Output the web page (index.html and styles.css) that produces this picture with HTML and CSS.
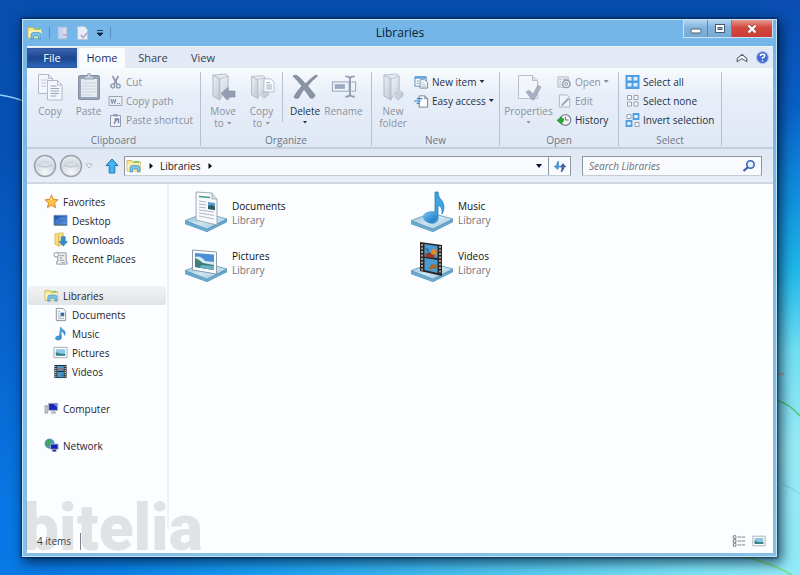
FILE: index.html
```html
<!DOCTYPE html>
<html lang="en">
<head>
<meta charset="utf-8">
<title>Libraries</title>
<link rel="stylesheet" href="styles.css">
</head>
<body>
<svg class="defs" aria-hidden="true">
  <defs>
    <linearGradient id="gFolder" x1="0" y1="0" x2="1" y2="1"><stop offset="0" stop-color="#f0f3f8"/><stop offset="1" stop-color="#bcc4d0"/></linearGradient>
    <linearGradient id="gBase" x1="0" y1="0" x2="1" y2="1"><stop offset="0" stop-color="#7fb4d4"/><stop offset=".5" stop-color="#cfe6f1"/><stop offset="1" stop-color="#8fbfdc"/></linearGradient>
    <linearGradient id="gBlue" x1="0" y1="0" x2="1" y2="1"><stop offset="0" stop-color="#7cc6f4"/><stop offset="1" stop-color="#1172c0"/></linearGradient>
    <linearGradient id="gSky" x1="0" y1="0" x2="0" y2="1"><stop offset="0" stop-color="#3f86d0"/><stop offset=".55" stop-color="#c6e6f2"/><stop offset=".6" stop-color="#3d7a7c"/><stop offset="1" stop-color="#5fb0c8"/></linearGradient>
    <linearGradient id="gDesk" x1="0" y1="0" x2="1" y2="1"><stop offset="0" stop-color="#1c4a9c"/><stop offset="1" stop-color="#5b9be6"/></linearGradient>
    <radialGradient id="gOrb" cx=".5" cy=".8" r=".8"><stop offset="0" stop-color="#f6f8fa"/><stop offset=".6" stop-color="#d3d9e0"/><stop offset="1" stop-color="#eef1f5"/></radialGradient>
  </defs>
  <symbol id="lib" viewBox="0 0 16 14">
    <path d="M1 1.500h5l1 1.500h7.500v9H1z" fill="#f5e58c" stroke="#c8b252" stroke-width=".8"/>
    <path d="M1.500 4.500h13v7h-13z" fill="#fbf2b4"/>
    <path d="M8 2h5v2H8z" fill="#8fc66a"/>
    <path d="M4 13V9q0-2.500 2.500-2.500h5Q14 6.500 14 9v4h-2.500v-3h-5v3z" fill="#7cc3e8" stroke="#3f8fc0" stroke-width=".7"/>
  </symbol>
  <symbol id="copy" viewBox="0 0 26 28">
    <g fill="#f4f6fb" stroke="#b0bacb"><path d="M1.500 1.500h10l4 4v15h-14z"/><path d="M11.500 1.500v4h4" fill="none"/><path d="M4 7h7M4 10h5M4 13h5" stroke-width=".8"/>
    <path d="M10.500 7.500h10l4.500 4.500v15H10.500z"/><path d="M20.500 7.500V12H25" fill="none"/></g>
    <path d="M13.500 13h6M13.500 15.500h8.500M13.500 18h8.500M13.500 20.500h8.500M13.500 23h6" stroke="#98a3b6"/>
  </symbol>
  <symbol id="paste" viewBox="0 0 24 28">
    <rect x="1.500" y="2.500" width="21" height="24" rx="1.500" fill="#98a4b8" stroke="#8390a6"/>
    <rect x="4" y="6" width="16" height="18" fill="#e6ebf4"/>
    <path d="M5 10h14M5 13h14M5 16h14M5 19h14M5 22h10" stroke="#c6cddb" stroke-width=".8"/>
    <path d="M7 6V3h3q0-2.500 2-2.500T14 3h3v3z" fill="#c6cedb" stroke="#8390a6" stroke-width=".8"/>
  </symbol>
  <symbol id="folder" viewBox="0 0 24 28">
    <path d="M3 2l13-1 2 2v16l-9 6z" fill="#e4e8ef" stroke="#b4bcca" stroke-width=".9"/>
    <path d="M3 2l7 4v21l-7-4z" fill="url(#gFolder)" stroke="#a6b0c0" stroke-width=".9"/>
    <path d="M10 6l8-3v14l4 3v3l-5 4-3-3 3-3-1-2-6 7z" fill="url(#gFolder)" stroke="#b4bcca" stroke-width=".8"/>
  </symbol>
  <symbol id="moveto" viewBox="0 0 26 28"><use href="#folder" width="24" height="28"/><path d="M11 20.500l7-6v3.500h7v6h-7v3z" fill="#939eb1" stroke="#8490a4" stroke-width=".7"/></symbol>
  <symbol id="copyto" viewBox="0 0 27 28"><use href="#folder" width="22" height="28"/><path d="M15.500 5.500h7l3.500 3.500v10h-10.500z" fill="#fbfcfe" stroke="#a3afc3" stroke-width=".8"/><path d="M18 9.500h4M18 12h6M18 14h6M18 16h6" stroke="#8a96aa" stroke-width=".8"/></symbol>
  <symbol id="delete" viewBox="0 0 26 26"><path d="M1 2q3-2 6 1 4 4 6.500 7Q19 4 24 1l1.500 1Q20 6 15.500 12q5 6 7.500 9-1 4-4.500 3Q15 19 12 15q-3 4-5.500 9-4 1-4.500-1 3-6 8-11Q5 6 1 2z" fill="#8a94a5" stroke="#747f92" stroke-width=".8"/></symbol>
  <symbol id="rename" viewBox="0 0 28 26">
    <rect x="1.500" y="7.500" width="18" height="10" fill="#edf1f8" stroke="#94a1b6"/><rect x="4" y="10" width="11" height="5" fill="#9ca8bc"/><path d="M22 7.500h4.500v10H22" fill="none" stroke="#94a1b6"/>
    <path d="M15.500 1.500q4 0 5 2 1-2 5-2M15.500 23.500q4 0 5-2 1 2 5 2M20.500 3v19" fill="none" stroke="#8f9bb0" stroke-width="2"/>
  </symbol>
  <symbol id="props" viewBox="0 0 26 28"><path d="M2.500 2.500h14l5 5v18h-19z" fill="#f2f5fa" stroke="#b8c0cf"/><path d="M16.500 2.500v5h5" fill="#dbe1eb" stroke="#b8c0cf"/><path d="M10 19l3-2 4 4 5-9 3 2-7 13h-2z" fill="#a6b0c1" stroke="#97a2b4" stroke-width=".6"/></symbol>
  <symbol id="cut" viewBox="0 0 14 14"><path d="M4 1l4.500 8M10 1L5.500 9" stroke="#8a95a8" stroke-width="1.600"/><circle cx="4.200" cy="11" r="1.900" fill="none" stroke="#8a95a8" stroke-width="1.300"/><circle cx="9.800" cy="11" r="1.900" fill="none" stroke="#8a95a8" stroke-width="1.300"/></symbol>
  <symbol id="path" viewBox="0 0 14 14"><path d="M.5 2.500h13v9H.5z" fill="#e9edf4" stroke="#9ba6b9"/><path d="M2.500 5l1.200 4.500L5 5l1.200 4.500L7.500 5M8.500 9.500h1M10.500 9.500h1" fill="none" stroke="#7f8a9e"/></symbol>
  <symbol id="shortcut" viewBox="0 0 14 14"><path d="M2 2.500h10v11H2z" fill="#eef1f7" stroke="#8f9bb0"/><path d="M5 1h4v2.500H5z" fill="#8f9bb0"/><path d="M6 6h4v4M10 6q-4 1-4 5" fill="none" stroke="#7b88a0" stroke-width="1.400"/></symbol>
  <symbol id="newitem" viewBox="0 0 16 14"><path d="M1 1.500h12v10H1z" fill="#fff" stroke="#4c8cc8"/><path d="M1 1h12v2.500H1z" fill="#5ea0da"/><path d="M3 6h2M3 8.500h2" stroke="#4c8cc8"/><path d="M6.500 4.500h5l3 3v6h-8z" fill="#f7f9fc" stroke="#7b8796"/><path d="M8 8h3M8 10h5M8 12h5" stroke="#9ba5b2" stroke-width=".7"/></symbol>
  <symbol id="easy" viewBox="0 0 16 14"><path d="M5.500 1.500h6l3 3v9h-9z" fill="#fff" stroke="#6d8096"/><path d="M11.500 1.500v3h3" fill="none" stroke="#6d8096"/><path d="M3 4.500h6M0 7h7M3 9.500h3" stroke="#2f83d0" stroke-width="1.300"/></symbol>
  <symbol id="open" viewBox="0 0 16 14"><path d="M1 1.500h11v11H1z" fill="#eceff5" stroke="#adb6c5"/><path d="M2.500 4h2M2.500 7h2M2.500 10h2M6 4h5" stroke="#9ca7b8"/><circle cx="10" cy="9" r="4" fill="#e6eaf1" stroke="#8a95a7" stroke-width="1.400"/><circle cx="10" cy="9" r="1.500" fill="none" stroke="#8a95a7"/></symbol>
  <symbol id="edit" viewBox="0 0 16 14"><path d="M2.500 .5h8l3 3v10h-11z" fill="#f1f4f9" stroke="#a9b3c4"/><path d="M13 5L7 11l-2 1 .5-2 6-6z" fill="#a9b4c6" stroke="#8b98ae" stroke-width=".7"/></symbol>
  <symbol id="history" viewBox="0 0 16 14"><circle cx="9" cy="7" r="5.700" fill="#f2f4f5" stroke="#7f8890" stroke-width="1.300"/><path d="M9 3.500V7h3" fill="none" stroke="#606a74"/><path d="M0 7.500L4.500 3.500v2h2.500l-.5 3.500H5v2.500z" fill="#27a82e" stroke="#14801d" stroke-width=".6"/></symbol>
  <symbol id="selall" viewBox="0 0 14 14"><path d="M0 0h14v14H0z" fill="#4d9fe4"/><path d="M2 2h4v3.500H2zM8 2h4v3.500H8zM2 8h4v3.500H2zM8 8h4v3.500H8z" fill="#e2effc"/></symbol>
  <symbol id="selnone" viewBox="0 0 14 14"><path d="M2 1.500h4v4H2zM8.500 1.500h4v4h-4zM2 8h4v4H2zM8.500 8h4v4h-4z" fill="#f7f8fa" stroke="#99a1ae"/></symbol>
  <symbol id="selinv" viewBox="0 0 14 14"><path d="M1.500 1.500h4v4h-4zM9.500 9.500h4v4h-4z" fill="#f7f8fa" stroke="#99a1ae"/><path d="M8 1h5v5H8zM1 8h5v5H1z" fill="#f2f8ff" stroke="#4d9fe4" stroke-width="1.800"/></symbol>
  <symbol id="tick" viewBox="0 0 14 14"><path d="M1.500 .5h7l3 3v10h-10z" fill="#e9edf8" stroke="#b4c2e2"/><path d="M5 9l2 2.500L12 6" fill="none" stroke="#b5abd0" stroke-width="1.800"/></symbol>
  <symbol id="delpage" viewBox="0 0 14 14"><path d="M2 1h9v12H2z" fill="#c4d6ee" stroke="#a3bbe0"/><path d="M7 2h3v9H7z" fill="#e2d9ea"/><path d="M7 9h4" stroke="#b5a0c6" stroke-width="1.500"/></symbol>
  <symbol id="up" viewBox="0 0 14 16"><path d="M7 1l6 6.500H9.800V15H4.200V7.500H1z" fill="#43b4f2" stroke="#2174ae"/></symbol>
  <symbol id="refresh" viewBox="0 0 14 14"><path d="M5.500 2Q3.500 3 3.500 7H1l3.500 3.500L7 7H5.500z" fill="#4a9cd4" stroke="#2f78b6" stroke-width=".5"/><path d="M8 13q3-1.500 3-5h2L10 4.500 7 8h1.800Q9 11 8 13z" fill="#3f66b0" stroke="#2a4d94" stroke-width=".5"/></symbol>
  <symbol id="search" viewBox="0 0 14 14"><circle cx="8.500" cy="5.500" r="3.700" fill="#e4effa" stroke="#3b66b0" stroke-width="1.600"/><path d="M5.700 8.300L1.500 12" stroke="#3b66b0" stroke-width="2.200"/></symbol>
  <symbol id="star" viewBox="0 0 16 16"><path d="M8 1l2 4.700 5 .5-3.800 3.400 1.200 5L8 12l-4.400 2.600 1.200-5L1 6.200l5-.5z" fill="#fcc445" stroke="#d48728"/><path d="M8 3l1 3.500H6.500z" fill="#ffe9a0"/></symbol>
  <symbol id="desktop" viewBox="0 0 16 14"><path d="M1 1.500h14v10H1z" fill="url(#gDesk)" stroke="#6287b8" stroke-width=".7"/><path d="M1 11h14v1.500H1z" fill="#4a6690"/><path d="M3 9Q7 3 13 5" stroke="#6aa5ee" fill="none" stroke-width=".7"/></symbol>
  <symbol id="down" viewBox="0 0 16 16"><path d="M2 2l4-1h5v12l-5 2-4-2z" fill="#f5dc86" stroke="#d8b653" stroke-width=".8"/><path d="M6 3v12" stroke="#d8b653"/><path d="M9 5h4v5h2.500L11 15l-4.500-5H9z" fill="#2f8fd4" stroke="#1b6aa8" stroke-width=".6"/></symbol>
  <symbol id="recent" viewBox="0 0 16 16"><path d="M3 2h11v9h1v3H4v-3h1V6H3z" fill="#eef1f3" stroke="#8e979f"/><path d="M7 5h5M7 7.500h3M7 10h5M9 12.500h4" stroke="#89949e"/><circle cx="3.500" cy="4" r="2.500" fill="#f7f8f8" stroke="#8e979f"/></symbol>
  <symbol id="doc" viewBox="0 0 16 16"><path d="M3.500 1.500h7l3 3v10h-10z" fill="#fff" stroke="#868d95"/><path d="M5 4.500h3M5 6.500h2M5 8.500h2M5 10.500h7M5 12.500h7" stroke="#8aa0b8" stroke-width=".8"/><path d="M8 6h4v3.500H8z" fill="#39659c"/></symbol>
  <symbol id="note" viewBox="0 0 16 16"><path d="M8 1q1 2 3.500 3.500Q14 6.500 12.500 10q0-3-4-4.500l.5 7q0 2-3 2.500-3.500 0-3.500-2Q3 10.500 7 10.500z" fill="url(#gBlue)" stroke="#2683bd" stroke-width=".6"/></symbol>
  <symbol id="pic" viewBox="0 0 16 14"><path d="M1 1.500h14v11H1z" fill="#fff" stroke="#a0aab2"/><path d="M3 3.500h10v7H3z" fill="#8cc8e4"/><path d="M3 6.500l4 1.500 6 .5v2H3z" fill="#3a8288"/></symbol>
  <symbol id="film" viewBox="0 0 16 16"><path d="M1.500 1h13v14h-13z" fill="#25313a"/><path d="M4.500 2h7v5.500h-7zM4.500 8.500h7V14h-7z" fill="#4796cb"/><path d="M3 2v12M13 2v12" stroke="#e1e6e8" stroke-width="1.200" stroke-dasharray="1.200 1"/><path d="M5 5l3-1 3 2-2 1z" fill="#a96b5a"/><path d="M6 11l3 1 2-1v2z" fill="#335d74"/></symbol>
  <symbol id="pc" viewBox="0 0 16 16"><path d="M1 5h3v8H1z" fill="#c1c7cc" stroke="#8d969c" stroke-width=".7"/><path d="M5 2.500h9.500v7.500H5z" fill="#1a26b4" stroke="#a9b0bc"/><path d="M10 3l4 0v4z" fill="#6b82e4"/><path d="M8 10.500h4l1 3H7z" fill="#b9bec7"/></symbol>
  <symbol id="net" viewBox="0 0 16 16"><circle cx="6" cy="6" r="5" fill="#3f9fc6" stroke="#48808c" stroke-width=".6"/><path d="M2 4q3-3 6-2Q5 5 6 8l-3 1z" fill="#45a44e"/><path d="M7 6.500h8V12H7z" fill="#1420c0" stroke="#9ea9ba"/><path d="M9.500 12.500h3l1 2h-5z" fill="#1d2a78"/></symbol>
  <symbol id="base" viewBox="0 0 44 42">
    <path d="M1 30l20-8 22 6v3L23 41 1 33z" fill="#4c8cb5"/><path d="M1 33l22 8 20-10v-2L23 38 1 30z" fill="#67a9cf"/>
    <path d="M1 29.500L21 22l22 6-20 10z" fill="url(#gBase)" stroke="#6497b6" stroke-width=".7"/>
  </symbol>
  <symbol id="L-doc" viewBox="0 0 44 42"><use href="#base" width="44" height="42"/><path d="M12 1l16 1 5 6v26l-21-5z" fill="#f7f9fc" stroke="#8e98a6" stroke-width=".8"/><path d="M28 2v6h5" fill="#d8dfe8" stroke="#8e98a6" stroke-width=".7"/><path d="M15 5.500l11 1" stroke="#3e9d86" stroke-width="1.500"/><path d="M15 10l7 1M15 13l7 1M15 16l7 1M15 19l15 2M15 22l15 2.500M15 25l15 3" stroke="#b4b6c6"/><path d="M24 11l7 1v7l-7-1z" fill="#5c9cc4"/><path d="M24 15l4-1 3 2v3l-7-1z" fill="#2c5962"/></symbol>
  <symbol id="L-pic" viewBox="0 0 44 42"><use href="#base" width="44" height="42"/><path d="M8.500 9l24 2v22l-24-4z" fill="#fafcfd" stroke="#8f9ba5"/><path d="M11 12l19 1.500V29L11 26z" fill="#4a8ed4"/><path d="M11 16q6-2 10 4l9 1v4L11 23z" fill="#d4ebf2"/><path d="M11 17q5 2 8 5l11 2v5L11 26z" fill="#3f7c7c"/><path d="M17 24l13 1v4l-14-2z" fill="#6cb0c4"/></symbol>
  <symbol id="L-mus" viewBox="0 0 44 42"><use href="#base" width="44" height="42"/><path d="M25 1h3q0 5 4 9 4 6 0 13 1-7-4-9v14q-1 5-8 4-6-2-6-7 2-5 11-4z" fill="#3ba3e6" stroke="#1b70ab" stroke-width=".7"/><ellipse cx="20" cy="26" rx="7" ry="5.500" fill="url(#gBlue)"/></symbol>
  <symbol id="L-vid" viewBox="0 0 44 42"><use href="#base" width="44" height="42"/><path d="M10 1l22 3v31l-22-5z" fill="#2a2522"/><path d="M14.500 3l13 2v12l-13-1.500zM14.500 17l13 2v13l-13-3z" fill="#4a9bd4"/><path d="M12 3v27M30 5v28" stroke="#c4c4c0" stroke-width="1.500" stroke-dasharray="2 1.500"/><path d="M15 13l4-2 3 2 4-3-2 7-8-1z" fill="#9a3b28"/><circle cx="24" cy="11" r="3" fill="#d98a32"/><path d="M18 28l4-5 5 1-1 4z" fill="#a26b32"/><path d="M15 7l4 1-1 3z" fill="#28669e"/></symbol>
  <symbol id="v-list" viewBox="0 0 16 14"><path d="M1.500 1h3v3h-3zM1.500 5.500h3v3h-3zM1.500 10h3v3h-3z" fill="#fff" stroke="#6c7277"/><path d="M6.500 2.500H15M6.500 7H15M6.500 11.500H15" stroke="#6c7277" stroke-dasharray="4 .8"/></symbol>
</svg>

<svg class="wallpaper" viewBox="0 0 800 575" preserveAspectRatio="none" aria-hidden="true">
  <path d="M0 95q14 2 26 7" fill="none" stroke="#8fd0ff" stroke-width="1.500"/>
  <path d="M776 400q14 4 24 16" fill="none" stroke="#55c878" stroke-width="1.500"/>
  <path d="M740 556q30 6 52 19" fill="none" stroke="#7fe08c" stroke-width="2"/>
  <path d="M778 374h6" stroke="#a6b6ae" stroke-width="3"/>
  <path d="M782 484q10 4 18 10" fill="none" stroke="#6fd8d8"/>
</svg>

<main class="window">
  <header class="titlebar">
    <div class="quick">
      <svg class="i-lib"><use href="#lib"/></svg>
      <i class="tick"></i>
      <button class="bare" disabled aria-label="Delete"><svg class="i14"><use href="#delpage"/></svg></button>
      <button class="bare" disabled aria-label="Properties"><svg class="i14"><use href="#tick"/></svg></button>
      <button class="bare" aria-label="Customize toolbar"><svg class="i8" viewBox="0 0 8 8"><path d="M1 1.500h6M1 4h6L4 7z" stroke="#10243c" fill="#10243c" stroke-width=".8"/></svg></button>
      <i class="tick"></i>
    </div>
    <h1>Libraries</h1>
    <div class="caption">
      <button aria-label="Minimize"><svg viewBox="0 0 14 10"><rect x="2" y="5" width="10" height="4" rx="1" fill="#fff" stroke="#4a5b70"/></svg></button>
      <button aria-label="Maximize"><svg viewBox="0 0 14 10"><rect x="2.500" y=".5" width="9" height="8" fill="#fff" stroke="#4a5b70"/><rect x="5" y="3.500" width="4" height="2" fill="#7fb0da" stroke="#4a5b70"/></svg></button>
      <button class="close" aria-label="Close"><svg viewBox="0 0 14 10"><path d="M3.500 1.500l7 7M10.500 1.500l-7 7" stroke="#8a4444" stroke-width="3.600"/><path d="M3.500 1.500l7 7M10.500 1.500l-7 7" stroke="#fff" stroke-width="2.400"/></svg></button>
    </div>
  </header>

  <div class="client">
    <nav class="tabs">
      <button class="file">File</button>
      <button class="home">Home</button>
      <button>Share</button>
      <button>View</button>
      <span class="tools">
        <button class="bare" aria-label="Minimize the ribbon"><svg class="i10" viewBox="0 0 10 10"><path d="M1 5.500L5 2l4 3.500V8L5 5.500 1 8z" fill="#fff" stroke="#59616c" stroke-width=".9"/></svg></button>
        <button class="bare" aria-label="Help"><svg class="i12" viewBox="0 0 12 12"><circle cx="6" cy="6" r="5.500" fill="#3f6ad0" stroke="#a9bfea"/><path d="M4 4.500Q4 3 6 3t2 1.500Q8 5.700 6 6.200v1M6 8.200v1.300" fill="none" stroke="#fff" stroke-width="1.400"/></svg></button>
      </span>
    </nav>

    <section class="ribbon">
      <div class="group">
        <div class="tools-row g-clip">
          <button class="big" disabled><svg><use href="#copy"/></svg>Copy</button>
          <button class="big narrow" disabled><svg><use href="#paste"/></svg>Paste</button>
          <div class="stack">
            <button disabled><svg><use href="#cut"/></svg>Cut</button>
            <button disabled><svg><use href="#path"/></svg>Copy path</button>
            <button disabled><svg><use href="#shortcut"/></svg>Paste shortcut</button>
          </div>
        </div>
        <h2>Clipboard</h2>
      </div>
      <div class="group">
        <div class="tools-row g-org">
          <button class="big" disabled><svg><use href="#moveto"/></svg>Move<span>to <i class="arrow"></i></span></button>
          <button class="big narrow" disabled><svg><use href="#copyto"/></svg>Copy<span>to <i class="arrow"></i></span></button>
          <i class="rule"></i>
          <button class="big"><svg><use href="#delete"/></svg>Delete<span><i class="arrow"></i></span></button>
          <button class="big narrow" disabled><svg><use href="#rename"/></svg>Rename</button>
        </div>
        <h2>Organize</h2>
      </div>
      <div class="group">
        <div class="tools-row g-new">
          <button class="big" disabled><svg><use href="#folder"/></svg>New<span>folder</span></button>
          <div class="stack">
            <button><svg><use href="#newitem"/></svg>New item<i class="arrow"></i></button>
            <button><svg><use href="#easy"/></svg>Easy access<i class="arrow"></i></button>
          </div>
        </div>
        <h2>New</h2>
      </div>
      <div class="group">
        <div class="tools-row g-open">
          <button class="big" disabled><svg><use href="#props"/></svg>Properties<span><i class="arrow"></i></span></button>
          <div class="stack">
            <button disabled><svg><use href="#open"/></svg>Open<i class="arrow"></i></button>
            <button disabled><svg><use href="#edit"/></svg>Edit</button>
            <button><svg><use href="#history"/></svg>History</button>
          </div>
        </div>
        <h2>Open</h2>
      </div>
      <div class="group">
        <div class="tools-row g-sel">
          <div class="stack">
            <button><svg><use href="#selall"/></svg>Select all</button>
            <button><svg><use href="#selnone"/></svg>Select none</button>
            <button><svg><use href="#selinv"/></svg>Invert selection</button>
          </div>
        </div>
        <h2>Select</h2>
      </div>
    </section>

    <div class="navbar">
      <div class="travel">
        <button class="bare" disabled aria-label="Back"><svg class="orb" viewBox="0 0 24 24"><circle cx="12" cy="12" r="10.500" fill="url(#gOrb)" stroke="#9aa2ac" stroke-width="1.500"/><path d="M5 11q7 4 14 0" stroke="#b5bdc7" fill="none"/></svg></button>
        <button class="bare" disabled aria-label="Forward"><svg class="orb" viewBox="0 0 24 24"><circle cx="12" cy="12" r="10.500" fill="url(#gOrb)" stroke="#9aa2ac" stroke-width="1.500"/><path d="M5 11q7 4 14 0" stroke="#b5bdc7" fill="none"/></svg></button>
        <button class="bare" disabled aria-label="Recent pages"><svg class="i8" viewBox="0 0 8 8"><path d="M1 2h6L4 6z" fill="#fff" stroke="#b0b8c2"/></svg></button>
      </div>
      <button class="bare up" aria-label="Up"><svg><use href="#up"/></svg></button>
      <div class="address">
        <svg class="i-lib"><use href="#lib"/></svg>
        <svg class="i8" viewBox="0 0 8 8"><path d="M2.500 1v6L6 4z"/></svg>
        <a href="#">Libraries</a>
        <svg class="i8" viewBox="0 0 8 8"><path d="M2.500 1v6L6 4z"/></svg>
        <button class="bare drop" aria-label="Previous locations"><svg class="i8" viewBox="0 0 8 8"><path d="M1 2h6L4 6z" fill="#06103c"/></svg></button>
        <button class="bare refresh" aria-label="Refresh"><svg class="i14"><use href="#refresh"/></svg></button>
      </div>
      <label class="search"><input type="text" placeholder="Search Libraries" aria-label="Search Libraries"><svg class="i14"><use href="#search"/></svg></label>
    </div>

    <div class="body">
      <aside class="tree">
        <ul>
          <li><a href="#"><svg><use href="#star"/></svg>Favorites</a></li>
          <li class="sub"><a href="#"><svg><use href="#desktop"/></svg>Desktop</a></li>
          <li class="sub"><a href="#"><svg><use href="#down"/></svg>Downloads</a></li>
          <li class="sub"><a href="#"><svg><use href="#recent"/></svg>Recent Places</a></li>
        </ul>
        <ul>
          <li class="selected"><a href="#"><svg><use href="#lib"/></svg>Libraries</a></li>
          <li class="sub"><a href="#"><svg><use href="#doc"/></svg>Documents</a></li>
          <li class="sub"><a href="#"><svg><use href="#note"/></svg>Music</a></li>
          <li class="sub"><a href="#"><svg><use href="#pic"/></svg>Pictures</a></li>
          <li class="sub"><a href="#"><svg><use href="#film"/></svg>Videos</a></li>
        </ul>
        <ul><li><a href="#"><svg><use href="#pc"/></svg>Computer</a></li></ul>
        <ul><li><a href="#"><svg><use href="#net"/></svg>Network</a></li></ul>
      </aside>
      <section class="files">
        <a class="item" href="#"><svg><use href="#L-doc"/></svg><span>Documents<small>Library</small></span></a>
        <a class="item" href="#"><svg><use href="#L-mus"/></svg><span>Music<small>Library</small></span></a>
        <a class="item" href="#"><svg><use href="#L-pic"/></svg><span>Pictures<small>Library</small></span></a>
        <a class="item" href="#"><svg><use href="#L-vid"/></svg><span>Videos<small>Library</small></span></a>
      </section>
    </div>

    <footer class="status">
      <span>4 items</span><i class="bar"></i>
      <button class="bare" aria-label="Details view"><svg><use href="#v-list"/></svg></button>
      <button class="bare" aria-label="Icon view"><svg><use href="#pic"/></svg></button>
    </footer>
  </div>
  <div class="watermark">bitelia</div>
</main>
</body>
</html>
```
FILE: styles.css
```css
* { box-sizing: border-box; }

body {
  margin: 0;
  min-height: 100vh;
  padding: 19px 23px 18px 22px;
  display: flex;
  font: 10px/14px "Open Sans", "Noto Sans", sans-serif;
  color: #1c2430;
  background:
    linear-gradient(180deg, #0a4db0 0%, #0860c8 18%, #1090e0 34%, #20b8ec 47%, #70e0f4 61%, #98ecf6 78%, #90eaf8 100%) 100% 0 / 40px 100% no-repeat,
    linear-gradient(90deg, #0878e6 0%, #0a84ec 15%, #18a0f4 32%, #50c8f0 62%, #80e8f8 88%, #90eaf8 100%) 0 100% / 100% 40px no-repeat,
    linear-gradient(180deg, #064fae 0%, #0650b4 25%, #0765cf 60%, #0878e6 90%);
}

.defs { position: absolute; width: 0; height: 0; }
.wallpaper { position: absolute; inset: 0; width: 100%; height: 100%; }

button { font: inherit; color: inherit; border: 0; padding: 0; background: none; display: flex; align-items: center; justify-content: center; }
button:disabled { color: #8b919c; }
a { color: inherit; text-decoration: none; }
ul { list-style: none; margin: 0; padding: 0; }
h1, h2 { margin: 0; font-weight: 400; }
svg { display: block; flex: none; }

.i8 { width: 8px; height: 8px; }
.i10 { width: 12px; height: 12px; }
.i12 { width: 13px; height: 13px; }
.i14 { width: 14px; height: 14px; }
.i-lib { width: 16px; height: 14px; }

.window {
  position: relative;
  flex: 1;
  display: flex;
  flex-direction: column;
  padding: 0 3px 3px 4px;
  border: 1px solid #c4e4f8;
  background: linear-gradient(#74b6e8, #86c0e8);
  box-shadow: 0 0 2px 1px rgba(0, 20, 50, .6), 3px 4px 12px 2px rgba(0, 20, 50, .7);
}

.titlebar {
  height: 26px;
  display: grid;
  grid-template-columns: 1fr auto 1fr;
  align-items: center;
}
.titlebar h1 { font-size: 12px; line-height: 16px; color: #10202e; }
.quick { display: flex; align-items: center; gap: 6px; }
.tick { width: 1px; height: 12px; background: #5791be; }
.caption { justify-self: end; align-self: start; display: flex; border: 1px solid #c8e2f4; border-top: 0; }
.caption button { width: 24px; height: 17px; border-right: 1px solid #5e86ac; background: linear-gradient(#b4d6f0, #83b4dc 45%, #75aad6); }
.caption svg { width: 14px; height: 10px; }
.caption .close { width: 40px; border-right: 0; background: linear-gradient(#e69a90, #d4483f 45%, #c93c36); }

.client { flex: 1; display: flex; flex-direction: column; background: #fcfdfe; }

.tabs { height: 22px; display: flex; align-items: flex-end; background: #e3eaf6; border-top: 1px solid #eff5fb; font-size: 11px; color: #34404f; }
.tabs > button { width: 50px; height: 20px; }
.tabs .file { background: linear-gradient(#3a62b0, #1b468f 50%, #2f66ba); color: #fff; border: 1px solid #2c58a4; }
.tabs .home { width: 46px; margin: 0 3px 0 2px; background: #fbfcfe; border-radius: 2px 2px 0 0; color: #1b2c66; }
.tools { margin-left: auto; align-self: center; display: flex; gap: 8px; padding-right: 4px; }

.ribbon {
  display: grid;
  grid-template-columns: 174px 171px 128px 119px 103px;
  padding: 4px 0 1px;
  color: #22304a;
  background: linear-gradient(#f8fafd, #e8eef8 35%, #dfe8f5);
  border-bottom: 2px solid #c3cfdd;
}
.group { border-right: 1px solid #b6c0ce; display: flex; flex-direction: column; justify-content: space-between; height: 74px; }
.group h2 { font-size: 10px; line-height: 12px; text-align: center; color: #6d7786; }
.tools-row { display: flex; align-items: flex-start; }
.big { flex-direction: column; width: 40px; line-height: 12px; }
.big > svg { width: 26px; height: 28px; margin: 1px 0 4px; }
.big > span { display: flex; align-items: center; justify-content: center; gap: 3px; min-height: 10px; }
.narrow { width: 37px; }
.arrow { width: 5px; height: 3px; background: currentColor; clip-path: polygon(0 0, 100% 0, 50% 100%); }
.rule { width: 1px; height: 50px; background: #b6c0ce; }
.stack button { gap: 3px; height: 19px; }
.stack svg { width: 15px; height: 14px; }
.g-clip { padding-left: 3px; }
.g-clip .stack { padding-left: 1px; }
.g-org { padding-left: 2px; }
.g-org .rule { margin: 0 2px; }
.g-new .big { width: 42px; }
.g-open .big { width: 57px; }
.g-sel { padding-left: 6px; }

.navbar { height: 35px; display: flex; align-items: center; padding: 0 11px 0 6px; background: linear-gradient(#dfe7f3, #e8eef7); border-bottom: 2px solid #cdd8e4; }
.travel { display: flex; align-items: center; gap: 2px; }
.orb { width: 24px; height: 24px; }
.up { margin: 0 5px 0 12px; }
.up svg { width: 14px; height: 16px; }
.address { flex: 1; height: 20px; display: flex; align-items: center; gap: 5px; padding-left: 1px; background: #f8fafd; border: 1px solid #8d97a4; border-bottom-color: #c4ccd6; color: #10161e; }
.drop { margin-left: auto; }
.refresh { height: 100%; width: 22px; border-left: 1px solid #8d97a4; }
.search { width: 180px; height: 20px; margin-left: 11px; display: flex; align-items: center; padding: 0 5px 0 6px; background: #f8fafd; border: 1px solid #8d97a4; border-bottom-color: #c4ccd6; }
.search input { flex: 1; min-width: 0; border: 0; padding: 0; background: none; font: inherit; outline: 0; }
.search input::placeholder { color: #6a717a; font-style: italic; opacity: 1; }

.body { flex: 1; display: flex; }
.tree { width: 142px; padding: 8px 1px 0; border-right: 2px solid #eff3f8; display: flex; flex-direction: column; gap: 18px; }
.tree li { height: 19px; padding-left: 16px; display: flex; align-items: center; }
.tree .sub { padding-left: 25px; }
.tree a { display: flex; align-items: center; gap: 4px; }
.tree svg { width: 15px; height: 15px; }
.tree .selected { background: linear-gradient(#f2f3f4, #e2e3e5); border-radius: 2px; }

.files { flex: 1; display: grid; grid-template-columns: 226px 226px; grid-auto-rows: 50px; padding: 7px 0 0 15px; align-content: start; }
.item { display: flex; gap: 4px; color: #0c1014; }
.item svg { width: 44px; height: 42px; }
.item span { padding-top: 8px; }
.item small { display: block; font-size: 10px; color: #71767d; }

.status { height: 24px; display: flex; align-items: center; padding: 0 7px 0 10px; gap: 6px; color: #303a4c; }
.status svg { width: 14px; height: 14px; }
.bar { width: 1px; height: 17px; margin: 0 auto 0 3px; background: #7d8590; }

.watermark {
  position: absolute;
  left: 0;
  bottom: -2px;
  pointer-events: none;
  font: 900 64px/58px Roboto, "Liberation Sans", sans-serif;
  color: rgba(120, 120, 120, .2);
}
```
